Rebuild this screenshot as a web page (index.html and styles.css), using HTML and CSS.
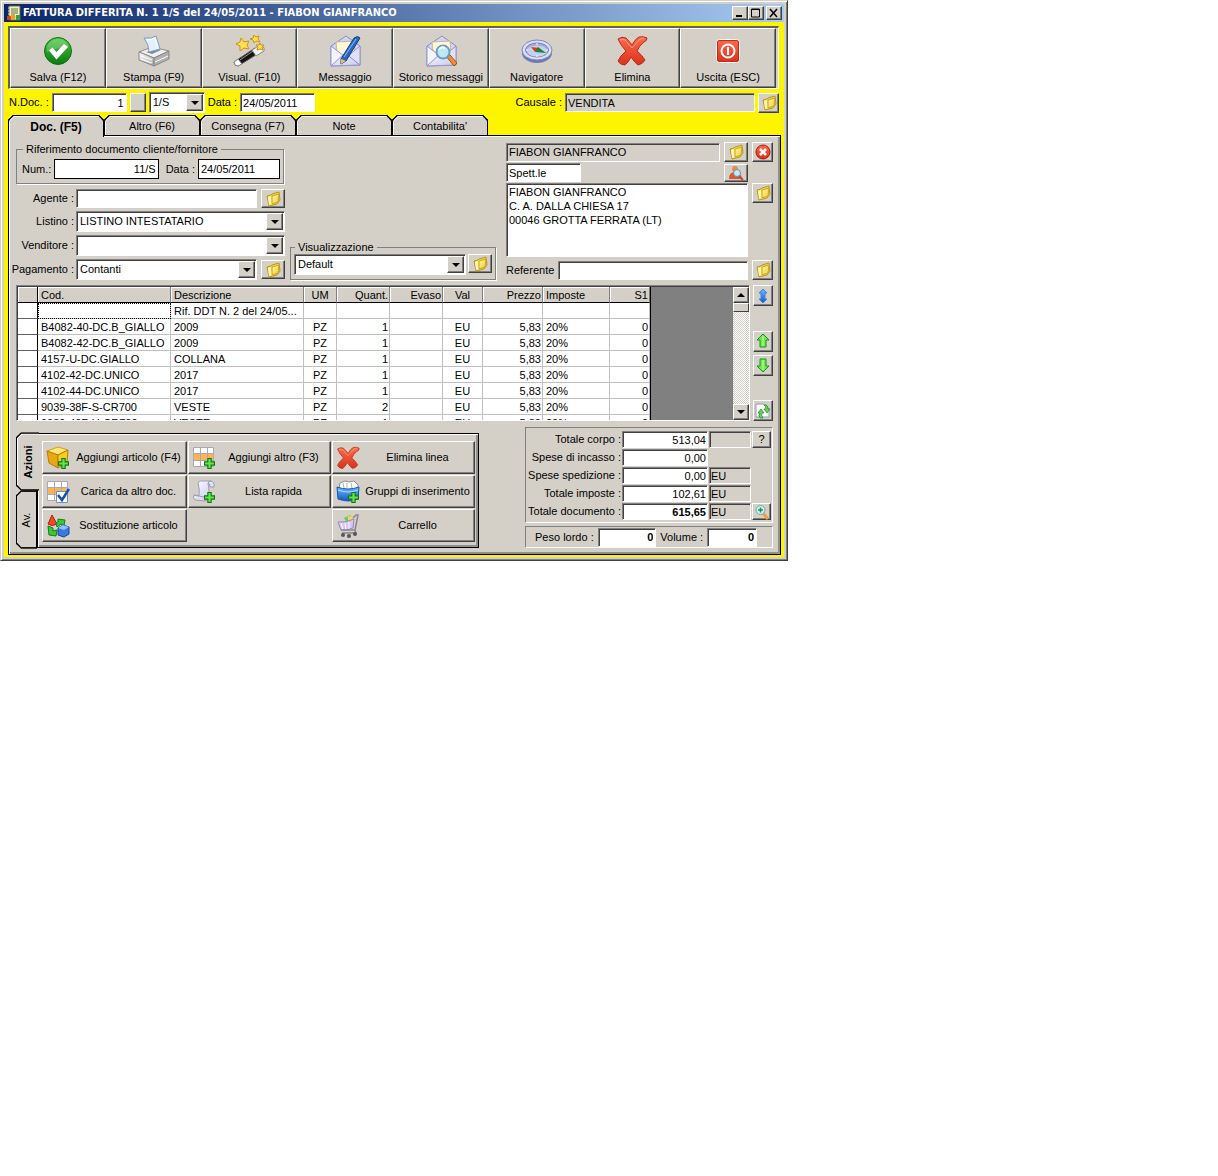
FILE: index.html
```html
<!doctype html>
<html lang="it">
<head>
    <meta charset="UTF-8">
    <meta name="viewport" content="width=device-width, initial-scale=1.0">
    <title>FATTURA DIFFERITA</title>
    <link rel="stylesheet" href="styles.css">
</head>
<body>
    <!-- icone -->
    <svg class="defs" aria-hidden="true">
        <defs>
            <linearGradient id="gGreen" x1="0" y1="0" x2="0" y2="1"><stop offset="0" stop-color="#4cc840"/><stop offset="1" stop-color="#0a7a12"/></linearGradient>
            <linearGradient id="gRed" x1="0" y1="0" x2="0" y2="1"><stop offset="0" stop-color="#ff6a4a"/><stop offset="1" stop-color="#d8321c"/></linearGradient>
            <linearGradient id="gGold" x1="0" y1="0" x2="1" y2="1"><stop offset="0" stop-color="#fff8a0"/><stop offset="1" stop-color="#f0cc30"/></linearGradient>
            <linearGradient id="gLilac" x1="0" y1="0" x2="1" y2="1"><stop offset="0" stop-color="#ffffff"/><stop offset="1" stop-color="#c4c4ee"/></linearGradient>
            <linearGradient id="gBlue" x1="0" y1="0" x2="0" y2="1"><stop offset="0" stop-color="#6cb8ff"/><stop offset="1" stop-color="#1458c0"/></linearGradient>
            <linearGradient id="gSteel" x1="0" y1="0" x2="1" y2="1"><stop offset="0" stop-color="#ffffff"/><stop offset="1" stop-color="#a8a8ac"/></linearGradient>
        </defs>
        <symbol id="i-plus" viewBox="0 0 10 10">
            <path d="M3.5.5h3v3h3v3h-3v3h-3v-3h-3v-3h3z" fill="#6be04a" stroke="#0c7a14"/>
        </symbol>
        <symbol id="i-app" viewBox="0 0 16 16">
            <path d="M3 1h11v14H3z" fill="#f2f0c8" stroke="#6a6a30"/>
            <path d="M5 4h7M5 6h7M5 8h7M5 10h4" stroke="#58783c"/>
            <path d="M2 3h2M2 6h2M2 9h2" stroke="#ddd"/>
            <path d="M1 11h4v4H1z" fill="#d04020"/><circle cx="7" cy="12" r="2.5" fill="#f0a020"/><path d="M10 10h4v5h-4z" fill="#38a040"/>
        </symbol>
        <symbol id="i-check" viewBox="0 0 32 32">
            <circle cx="16" cy="16" r="13.5" fill="url(#gGreen)" stroke="#0c7416"/>
            <path d="M5 12a11.500 11.500 0 0 1 22 0q-10 0-22 5z" fill="#fff" opacity=".22"/>
            <path d="M7 15.500l3.500-3 4 4.500 7.500-8 4 3-11.500 12.500z" fill="#fff"/>
        </symbol>
        <symbol id="i-printer" viewBox="0 0 32 32">
            <path d="M1 17l13-5 17 4-15 7z" fill="#f0f0f0" stroke="#8c8c8c"/>
            <path d="M1 17l15 6v8L1 25z" fill="url(#gSteel)" stroke="#888"/>
            <path d="M16 23l15-7v8l-15 7z" fill="#b0b0b0" stroke="#888"/>
            <path d="M3 21l11 4M3 24l11 4M17 27l13-6" stroke="#fff"/>
            <path d="M8 17l12-3 3 1-9 4z" fill="#888"/>
            <path d="M6 3q8 1 12-2l4 13-11 3q0-8-5-14z" fill="#e4f0ff" stroke="#7c9cc8"/>
            <path d="M9 5q5 0 8-2l3 10" fill="none" stroke="#fff"/>
        </symbol>
        <symbol id="i-wand" viewBox="0 0 32 32">
            <path d="M1 27l21-14 4 5L5 31q-4 0-4-4z" fill="#141414" stroke="#555"/>
            <path d="M19 15l8-5q5 1 4 6l-8 5z" fill="#f2f2f2" stroke="#888"/>
            <path d="M1 27l4-3 4 5-4 2q-4 0-4-4z" fill="#fff" stroke="#888"/>
            <path d="M7 25l13-9" stroke="#999"/>
            <g fill="#ffe050" stroke="#d09010">
                <path d="M8 3l3 4 5-1-2 4 2 4-5-1-4 3v-5l-4-2 4-2z"/>
                <path d="M21 0l2 2 3-1-1 3 2 3-4-1-2 2-1-3-3-1 3-1z"/>
                <path d="M27 8l1 2 3 0-2 2 1 3-3-1-3 1 1-3-2-2 3 0z"/>
            </g>
        </symbol>
        <symbol id="i-envelope" viewBox="0 0 32 32">
            <path d="M2 11L17 1l14 10v19L2 31z" fill="#d4d4f6" stroke="#8c8cc4"/>
            <path d="M7 7l18-1 1 12-9 6-9-6z" fill="#fff6d8" stroke="#c8b890"/>
            <path d="M2 11l13 10L2 31z" fill="#f4f4ff" stroke="#9494c8"/>
            <path d="M31 11L19 21l12 9z" fill="#e0e0fa" stroke="#9494c8"/>
            <path d="M2 31l14-13 15 12z" fill="url(#gLilac)" stroke="#9494c8"/>
        </symbol>
        <symbol id="i-mail" viewBox="0 0 32 32">
            <use href="#i-envelope"/>
            <path d="M12 24L25 3q4-3 6 0L17 26l-5 3z" fill="#2868c4" stroke="#123c84"/>
            <path d="M15 22L27 4" stroke="#8cc0ff"/>
            <path d="M12 24l5 2-5 3z" fill="#f0c060"/>
        </symbol>
        <symbol id="i-mailsearch" viewBox="0 0 32 32">
            <use href="#i-envelope"/>
            <path d="M22 22l3-2 7 8-3 3z" fill="#f09030" stroke="#a85010"/>
            <circle cx="18" cy="17" r="6.500" fill="#bce8fa" stroke="#6c9cc0" stroke-width="2"/>
            <path d="M14 15q2-4 6-2" stroke="#fff" stroke-width="2" fill="none"/>
        </symbol>
        <symbol id="i-compass" viewBox="0 0 32 32">
            <ellipse cx="16" cy="18" rx="15" ry="10" fill="#7078b0"/>
            <ellipse cx="16" cy="15" rx="15" ry="10" fill="#dcdff8" stroke="#8088b8"/>
            <ellipse cx="16" cy="15" rx="11.500" ry="7" fill="#a4acd8" stroke="#7880b4"/>
            <ellipse cx="16" cy="16" rx="10" ry="5.500" fill="#c8d0f0"/>
            <path d="M10 12l9 1-5 4z" fill="#e03820"/><path d="M17 12l8 6-11-1z" fill="#188830"/>
            <path d="M16 8v2M16 20v2M5 15h2M25 15h2" stroke="#fff"/>
        </symbol>
        <symbol id="i-cross" viewBox="0 0 32 32">
            <path d="M2 4q4-3 8-1 3 3 6 7 4-7 7-8 5-1 8 1 0 3-3 4-5 4-7 9 5 4 8 9-2 4-7 5-3-2-7-8-3 6-6 8-5 0-7-4 2-5 8-10-5-5-8-12z" fill="url(#gRed)" stroke="#b82c14"/>
            <path d="M4 5q3-1 5 0l7 8 8-9 4-1" stroke="#ff9c80" fill="none"/>
        </symbol>
        <symbol id="i-power" viewBox="0 0 32 32">
            <rect x="4.500" y="4.500" width="23" height="23" rx="3" fill="url(#gRed)" stroke="#fff"/>
            <rect x="5.500" y="5.500" width="21" height="21" rx="2" fill="none" stroke="#c02c10"/>
            <circle cx="16" cy="16" r="6.500" fill="none" stroke="#fff" stroke-width="2"/>
            <path d="M16 12v8" stroke="#fff" stroke-width="2"/>
        </symbol>
        <symbol id="i-folder" viewBox="0 0 16 16">
            <path d="M2 5l4-1 1-1 7-2 1 8-3 4-8 2z" fill="#f8d848" stroke="#b89420"/>
            <path d="M3 6l3-1 1 8-3 1z" fill="#fff8b0"/>
            <path d="M7 5l7-2-1 8-6 2z" fill="url(#gGold)" stroke="#c8a428"/>
        </symbol>
        <symbol id="i-usersearch" viewBox="0 0 16 16">
            <circle cx="7" cy="4" r="3" fill="#e88850"/>
            <path d="M1 14q0-7 6-7t7 7z" fill="#d85830"/>
            <path d="M11 11l4 4" stroke="#c84820" stroke-width="2"/>
            <circle cx="9" cy="8" r="3.500" fill="#c4e8f8" stroke="#6890a8"/>
        </symbol>
        <symbol id="i-clear" viewBox="0 0 16 16">
            <circle cx="8" cy="8" r="7" fill="url(#gRed)" stroke="#b81408"/>
            <path d="M5 5l6 6M11 5l-6 6" stroke="#fff" stroke-width="2.500"/>
        </symbol>
        <symbol id="i-updown" viewBox="0 0 16 16">
            <path d="M8 1l4 4h-2v6h2l-4 4-4-4h2V5H4z" fill="url(#gBlue)" stroke="#3c84e0"/>
        </symbol>
        <symbol id="i-up" viewBox="0 0 16 16">
            <path d="M8 1l6 6h-3v7H5V7H2z" fill="#70e850" stroke="#18941c"/><path d="M8 3v10" stroke="#c0ffa8"/>
        </symbol>
        <symbol id="i-down" viewBox="0 0 16 16">
            <path d="M8 15l6-6h-3V2H5v7H2z" fill="#70e850" stroke="#18941c"/><path d="M8 3v10" stroke="#c0ffa8"/>
        </symbol>
        <symbol id="i-refresh" viewBox="0 0 16 16">
            <path d="M1 1h7l6 5v8H1z" fill="#fff" stroke="#889cc0"/>
            <path d="M5 15q-2-3 0-5H3l3-4 3 4H7q-1 2 1 5zM9 2q4-1 4 4h2l-3 4-3-4h2q0-3-2-4z" fill="#68d850" stroke="#208828" stroke-width=".7"/>
        </symbol>
        <symbol id="i-cube" viewBox="0 0 24 24">
            <path d="M1 5l11-4 10 3-10 5z" fill="#ffe878" stroke="#d8a010"/>
            <path d="M1 5l11 4v13L3 17z" fill="#e8a810" stroke="#b87c08"/>
            <path d="M12 9l10-5-1 13-9 5z" fill="#f8cc20" stroke="#b87c08"/>
            <use href="#i-plus" x="12" y="12" width="11" height="11"/>
        </symbol>
        <symbol id="i-grid" viewBox="0 0 24 24">
            <path d="M1.500 1.500h20v19h-20z" fill="#fff" stroke="#a8a8b8"/>
            <path d="M2 8h19v6H2z" fill="#ffb450"/>
            <path d="M8.500 2v18M15.500 2v18M2 7.500h19M2 14.500h19" stroke="#a8a8b8"/>
        </symbol>
        <symbol id="i-gridplus" viewBox="0 0 24 24">
            <use href="#i-grid"/><use href="#i-plus" x="12" y="12" width="11" height="11"/>
        </symbol>
        <symbol id="i-gridcheck" viewBox="0 0 24 24">
            <use href="#i-grid"/>
            <path d="M10.500 11.500h11v11h-11z" fill="#fff" stroke="#7090c0"/>
            <path d="M12 15l4 5 7-11" stroke="#1450b0" stroke-width="2.500" fill="none"/>
        </symbol>
        <symbol id="i-scroll" viewBox="0 0 24 24">
            <path d="M6 3q1-3 5-2h8q4 1 3 6h-4q0-4-2-4 2 11 0 14 0 4-3 4L3 20q-3-2-1-5l5 1q1-7-1-13z" fill="url(#gLilac)" stroke="#9c9cb4"/>
            <path d="M2 15l10 2q2 2 1 4M19 1q-3 0-3 3" stroke="#9c9cb4" fill="none"/>
            <use href="#i-plus" x="12" y="12" width="11" height="11"/>
        </symbol>
        <symbol id="i-shapes" viewBox="0 0 24 24">
            <path d="M6 1l5 9q-5 3-9 0z" fill="#f04828" stroke="#b02010"/>
            <path d="M12 5l7 1-1 6-3-2-4 3-1-4 2-1z" fill="#38c838" stroke="#108018"/>
            <path d="M2 12l5 2 0 3 4-1-1 6-7-1z" fill="#38c838" stroke="#108018"/>
            <path d="M12 14l5-3 6 2v7l-5 3-6-2z" fill="#3878e0" stroke="#1444a0"/><path d="M12 14l6 2 5-3-6-2z" fill="#90c0ff"/>
        </symbol>
        <symbol id="i-box" viewBox="0 0 24 24">
            <path d="M4 3l5-2 4 1 5-1 4 4v5H3z" fill="#fff" stroke="#909090"/>
            <path d="M7 3l1 5M11 3v5M15 3l1 5" stroke="#b0b0b0"/>
            <path d="M1 7q11 4 22 0l-1 12q-9 4-20 0z" fill="url(#gBlue)" stroke="#1458b0"/>
            <path d="M2 10q10 4 20 0" stroke="#a8e0ff" fill="none"/>
            <use href="#i-plus" x="12" y="12" width="11" height="11"/>
        </symbol>
        <symbol id="i-cart" viewBox="0 0 24 24">
            <path d="M8 4l6-3 3 5-6 3z" fill="#60d060"/><path d="M12 2l6 1-1 4h-5z" fill="#f4d850"/>
            <path d="M2 8q8 1 16-3l-1 9q-6 2-12 2z" fill="#d8c4f8" stroke="#9888c0"/>
            <path d="M5 9l2 7M9 9l1 7M13 8v7" stroke="#fff"/>
            <path d="M17 4l3-3h2l-3 15 1 4M5 16l14 0M6 19l13 0" stroke="#888" fill="none" stroke-width="1.500"/>
            <circle cx="7" cy="21" r="2" fill="#555"/><circle cx="13" cy="22" r="2" fill="#555"/><circle cx="19" cy="20" r="2" fill="#555"/>
        </symbol>
        <symbol id="i-zoom" viewBox="0 0 16 16">
            <path d="M9 9l5 6" stroke="#f0a040" stroke-width="3"/>
            <circle cx="6.500" cy="6" r="4.500" fill="#d0f4e8" stroke="#70a8a8"/>
            <path d="M4 6h5M6.500 3.500v5" stroke="#189060" stroke-width="1.500"/>
        </symbol>
    </svg>

    <main class="window">
        <header class="titlebar">
            <svg class="icon16"><use href="#i-app"/></svg>
            <h1>FATTURA DIFFERITA N. 1 1/S del 24/05/2011 - FIABON GIANFRANCO</h1>
            <div class="win-buttons">
                <button class="btn win-btn" aria-label="Riduci"><svg viewBox="0 0 12 10"><path d="M2 8h6" stroke="#000" stroke-width="2"/></svg></button>
                <button class="btn win-btn" aria-label="Ingrandisci"><svg viewBox="0 0 12 10"><path d="M1.500 1v8h8V1zM1 1.500h9" fill="none" stroke="#000"/></svg></button>
                <button class="btn win-btn win-close" aria-label="Chiudi"><svg viewBox="0 0 12 10"><path d="M2 1l7 8M9 1L2 9" stroke="#000" stroke-width="1.500"/></svg></button>
            </div>
        </header>

        <div class="body">
            <nav class="toolbar">
                <button class="btn"><svg class="icon32"><use href="#i-check"/></svg>Salva (F12)</button>
                <button class="btn"><svg class="icon32"><use href="#i-printer"/></svg>Stampa (F9)</button>
                <button class="btn"><svg class="icon32"><use href="#i-wand"/></svg>Visual. (F10)</button>
                <button class="btn"><svg class="icon32"><use href="#i-mail"/></svg>Messaggio</button>
                <button class="btn"><svg class="icon32"><use href="#i-mailsearch"/></svg>Storico messaggi</button>
                <button class="btn"><svg class="icon32"><use href="#i-compass"/></svg>Navigatore</button>
                <button class="btn"><svg class="icon32"><use href="#i-cross"/></svg>Elimina</button>
                <button class="btn"><svg class="icon32"><use href="#i-power"/></svg>Uscita (ESC)</button>
            </nav>

            <div class="docbar">
                <label for="nDoc">N.Doc. :</label>
                <input class="field w-doc num" type="text" id="nDoc" value="1">
                <button class="btn btn-blank" aria-label="Numero"></button>
                <span class="select w-serie"><select class="field" id="serie" aria-label="Serie"><option>1/S</option></select></span>
                <label for="dataDoc">Data :</label>
                <input class="field w-doc" type="text" id="dataDoc" value="24/05/2011">
                <label class="push" for="causale">Causale :</label>
                <input class="field readonly w-causale" type="text" id="causale" value="VENDITA" readonly>
                <button class="btn btn-icon" aria-label="Cerca causale"><svg class="icon16"><use href="#i-folder"/></svg></button>
            </div>

            <div class="tabs" role="tablist">
                <button class="tab active" role="tab">Doc. (F5)</button>
                <button class="tab" role="tab">Altro (F6)</button>
                <button class="tab" role="tab">Consegna (F7)</button>
                <button class="tab" role="tab">Note</button>
                <button class="tab" role="tab">Contabilita'</button>
            </div>

            <section class="panel">
                <div class="head">
                    <div class="head-left">
                        <fieldset class="group riferimento">
                            <legend>Riferimento documento cliente/fornitore</legend>
                            <label for="rifNum">Num.:</label>
                            <input class="field flat num" type="text" id="rifNum" value="11/S">
                            <label for="rifData">Data :</label>
                            <input class="field flat w-data" type="text" id="rifData" value="24/05/2011">
                        </fieldset>
                        <div class="row">
                            <label for="agente">Agente :</label>
                            <input class="field" type="text" id="agente">
                            <button class="btn btn-icon wide" aria-label="Cerca agente"><svg class="icon16"><use href="#i-folder"/></svg></button>
                        </div>
                        <div class="row">
                            <label for="listino">Listino :</label>
                            <span class="select"><select class="field" id="listino"><option>LISTINO INTESTATARIO</option></select></span>
                        </div>
                        <div class="row">
                            <label for="venditore">Venditore :</label>
                            <span class="select"><select class="field" id="venditore"><option></option></select></span>
                        </div>
                        <div class="row">
                            <label for="pagamento">Pagamento :</label>
                            <span class="select"><select class="field" id="pagamento"><option>Contanti</option></select></span>
                            <button class="btn btn-icon wide" aria-label="Cerca pagamento"><svg class="icon16"><use href="#i-folder"/></svg></button>
                        </div>
                    </div>

                    <fieldset class="group visual">
                        <legend>Visualizzazione</legend>
                        <span class="select"><select class="field" aria-label="Visualizzazione"><option>Default</option></select></span>
                        <button class="btn btn-icon wide" aria-label="Cerca visualizzazione"><svg class="icon16"><use href="#i-folder"/></svg></button>
                    </fieldset>

                    <div class="head-right">
                        <div class="line">
                            <input class="field readonly grow" type="text" aria-label="Intestatario" value="FIABON GIANFRANCO" readonly>
                            <button class="btn btn-icon wide" aria-label="Cerca intestatario"><svg class="icon16"><use href="#i-folder"/></svg></button>
                            <button class="btn btn-icon" aria-label="Annulla"><svg class="icon16"><use href="#i-clear"/></svg></button>
                        </div>
                        <div class="line">
                            <input class="field w-doc" type="text" aria-label="Titolo" value="Spett.le">
                            <button class="btn btn-icon wide push indent" aria-label="Scheda cliente"><svg class="icon16"><use href="#i-usersearch"/></svg></button>
                        </div>
                        <div class="line top">
                            <textarea class="field grow" rows="5" aria-label="Indirizzo">FIABON GIANFRANCO
C. A. DALLA CHIESA 17
00046 GROTTA FERRATA (LT)</textarea>
                            <button class="btn btn-icon" aria-label="Cerca indirizzo"><svg class="icon16"><use href="#i-folder"/></svg></button>
                        </div>
                        <div class="line">
                            <label for="referente">Referente</label>
                            <input class="field grow" type="text" id="referente">
                            <button class="btn btn-icon" aria-label="Cerca referente"><svg class="icon16"><use href="#i-folder"/></svg></button>
                        </div>
                    </div>
                </div>

                <div class="lines">
                    <div class="grid">
                        <div class="grid-view">
                            <table>
                                <colgroup>
                                    <col class="c-mark"><col class="c-cod"><col class="c-cod"><col class="c-um"><col class="c-qta"><col class="c-qta"><col class="c-val"><col class="c-prezzo"><col class="c-imp"><col class="c-val">
                                </colgroup>
                                <thead>
                                    <tr><th></th><th>Cod.</th><th>Descrizione</th><th class="c">UM</th><th class="r">Quant.</th><th class="r">Evaso</th><th class="c">Val</th><th class="r">Prezzo</th><th>Imposte</th><th class="r">S1</th></tr>
                                </thead>
                                <tbody>
                                    <tr><th></th><td class="focus"></td><td>Rif. DDT N. 2 del 24/05...</td><td></td><td></td><td></td><td></td><td></td><td></td><td></td></tr>
                                    <tr><th></th><td>B4082-40-DC.B_GIALLO</td><td>2009</td><td class="c">PZ</td><td class="r">1</td><td></td><td class="c">EU</td><td class="r">5,83</td><td>20%</td><td class="r">0</td></tr>
                                    <tr><th></th><td>B4082-42-DC.B_GIALLO</td><td>2009</td><td class="c">PZ</td><td class="r">1</td><td></td><td class="c">EU</td><td class="r">5,83</td><td>20%</td><td class="r">0</td></tr>
                                    <tr><th></th><td>4157-U-DC.GIALLO</td><td>COLLANA</td><td class="c">PZ</td><td class="r">1</td><td></td><td class="c">EU</td><td class="r">5,83</td><td>20%</td><td class="r">0</td></tr>
                                    <tr><th></th><td>4102-42-DC.UNICO</td><td>2017</td><td class="c">PZ</td><td class="r">1</td><td></td><td class="c">EU</td><td class="r">5,83</td><td>20%</td><td class="r">0</td></tr>
                                    <tr><th></th><td>4102-44-DC.UNICO</td><td>2017</td><td class="c">PZ</td><td class="r">1</td><td></td><td class="c">EU</td><td class="r">5,83</td><td>20%</td><td class="r">0</td></tr>
                                    <tr><th></th><td>9039-38F-S-CR700</td><td>VESTE</td><td class="c">PZ</td><td class="r">2</td><td></td><td class="c">EU</td><td class="r">5,83</td><td>20%</td><td class="r">0</td></tr>
                                    <tr><th></th><td>9039-40F-U-CR700</td><td>VESTE</td><td class="c">PZ</td><td class="r">1</td><td></td><td class="c">EU</td><td class="r">5,83</td><td>20%</td><td class="r">0</td></tr>
                                </tbody>
                            </table>
                        </div>
                        <div class="scrollbar">
                            <button class="btn" aria-label="Su"><i class="arrow up"></i></button>
                            <div class="thumb"></div>
                            <button class="btn last" aria-label="Giu"><i class="arrow"></i></button>
                        </div>
                    </div>
                    <div class="side">
                        <button class="btn btn-icon" aria-label="Espandi"><svg class="icon16"><use href="#i-updown"/></svg></button>
                        <div class="side-move">
                            <button class="btn btn-icon" aria-label="Sposta su"><svg class="icon16"><use href="#i-up"/></svg></button>
                            <button class="btn btn-icon" aria-label="Sposta giu"><svg class="icon16"><use href="#i-down"/></svg></button>
                        </div>
                        <button class="btn btn-icon" aria-label="Aggiorna"><svg class="icon16"><use href="#i-refresh"/></svg></button>
                    </div>
                </div>

                <div class="foot">
                    <div class="actions">
                        <div class="vtabs" role="tablist">
                            <button class="vtab active" role="tab">Azioni</button>
                            <button class="vtab" role="tab">Av.</button>
                        </div>
                        <div class="action-grid">
                            <button class="btn action"><svg class="icon24"><use href="#i-cube"/></svg><span>Aggiungi articolo (F4)</span></button>
                            <button class="btn action"><svg class="icon24"><use href="#i-gridplus"/></svg><span>Aggiungi altro (F3)</span></button>
                            <button class="btn action"><svg class="icon24"><use href="#i-cross"/></svg><span>Elimina linea</span></button>
                            <button class="btn action"><svg class="icon24"><use href="#i-gridcheck"/></svg><span>Carica da altro doc.</span></button>
                            <button class="btn action"><svg class="icon24"><use href="#i-scroll"/></svg><span>Lista rapida</span></button>
                            <button class="btn action"><svg class="icon24"><use href="#i-box"/></svg><span>Gruppi di inserimento</span></button>
                            <button class="btn action"><svg class="icon24"><use href="#i-shapes"/></svg><span>Sostituzione articolo</span></button>
                            <button class="btn action third"><svg class="icon24"><use href="#i-cart"/></svg><span>Carrello</span></button>
                        </div>
                    </div>

                    <div class="summary">
                        <div class="totals">
                            <label for="totCorpo">Totale corpo :</label>
                            <input class="field num" type="text" id="totCorpo" value="513,04">
                            <input class="field readonly" type="text" aria-label="Valuta corpo" readonly>
                            <button class="btn">?</button>
                            <label for="incasso">Spese di incasso :</label>
                            <input class="field num" type="text" id="incasso" value="0,00">
                            <label class="first" for="spedizione">Spese spedizione :</label>
                            <input class="field num" type="text" id="spedizione" value="0,00">
                            <input class="field readonly" type="text" aria-label="Valuta spedizione" value="EU" readonly>
                            <label class="first" for="imposte">Totale imposte :</label>
                            <input class="field num" type="text" id="imposte" value="102,61">
                            <input class="field readonly" type="text" aria-label="Valuta imposte" value="EU" readonly>
                            <label class="first" for="totDoc">Totale documento :</label>
                            <input class="field num strong" type="text" id="totDoc" value="615,65">
                            <input class="field readonly" type="text" aria-label="Valuta documento" value="EU" readonly>
                            <button class="btn" aria-label="Dettaglio"><svg class="icon16"><use href="#i-zoom"/></svg></button>
                        </div>
                        <div class="weights">
                            <label for="peso">Peso lordo :</label>
                            <input class="field num strong w-peso" type="text" id="peso" value="0">
                            <label for="volume">Volume :</label>
                            <input class="field num strong w-volume" type="text" id="volume" value="0">
                        </div>
                    </div>
                </div>
            </section>
        </div>
    </main>
</body>
</html>
```

FILE: styles.css
```css
* {margin: 0; padding: 0; box-sizing: border-box;}
body {
    background: #fff;
    font: 11px/13px "Liberation Sans", Arial, sans-serif;
    color: #000;
}
button, input, select, textarea {
    font: inherit; color: inherit;
    border-radius: 0; outline: none;
}
svg {display: block; flex: none;}
.defs {position: absolute; width: 0; height: 0;}
.icon16 {width: 16px; height: 16px;}
.icon24 {width: 24px; height: 24px;}
.icon32 {width: 32px; height: 32px;}

/* finestra */
.window {
    width: 100%; max-width: 788px;
    padding: 3px;
    background: #d4d0c8;
    border: 1px solid;
    border-color: #d4d0c8 #404040 #404040 #d4d0c8;
    box-shadow: inset 1px 1px #fff, inset -1px -1px #808080;
}
.titlebar {
    display: flex;
    align-items: center;
    height: 18px;
    padding: 0 2px;
    background: linear-gradient(to right, #0a246a, #a6caf0);
    color: #fff;
}
.titlebar h1 {
    flex: 1;
    margin-left: 1px;
    font: bold 11px/18px "DejaVu Sans Condensed", "DejaVu Sans", sans-serif;
    white-space: nowrap;
    overflow: hidden;
}
.win-buttons {display: flex;}
.win-btn {width: 16px; height: 14px;}
.win-btn svg {width: 12px; height: 10px;}
.win-close {margin-left: 2px;}
.body {padding: 4px 3px 2px 4px; background: #fdf500;}

/* controlli */
.btn {
    display: flex;
    justify-content: center;
    align-items: center;
    background: #d4d0c8;
    border: 1px solid;
    border-color: #fff #404040 #404040 #fff;
    box-shadow: inset -1px -1px #808080;
    white-space: nowrap;
}
.btn-icon {flex: none; width: 21px; height: 20px;}
.btn-icon.wide {width: 24px;}
.btn-blank {width: 16px; height: 19px;}
.field {
    min-width: 0;
    height: 19px;
    padding: 0 2px;
    background: #fff;
    border: 1px solid;
    border-color: #808080 #fff #fff #808080;
    box-shadow: inset 1px 1px #404040;
}
.readonly {background: #d4d0c8;}
.flat {height: 20px; border-color: #000; box-shadow: none;}
.num {text-align: right;}
.strong {font-weight: bold;}
.grow {flex: 1;}
.push {margin-left: auto;}
.select {position: relative; display: block;}
.select select {
    display: block;
    width: 100%; height: 21px;
    padding: 0 18px 0 3px;
    appearance: none;
}
.select::before {
    content: "";
    position: absolute; top: 2px; right: 2px; bottom: 2px;
    width: 15px;
    background: #d4d0c8;
    border: 1px solid;
    border-color: #fff #404040 #404040 #fff;
    box-shadow: inset -1px -1px #808080;
    pointer-events: none;
}
.select::after {
    content: "";
    position: absolute; top: 9px; right: 6px;
    border: 4px solid transparent;
    border-top-color: #000;
    border-bottom: 0;
    pointer-events: none;
}
.group {
    display: flex;
    min-width: 0;
    border: 1px solid #808080;
    box-shadow: 1px 1px #fff;
}
.group legend {margin-left: 1px; padding: 0 3px; background: #d4d0c8;}

/* barra principale */
.toolbar {
    display: flex;
    margin-right: 2px;
    padding-right: 2px;
    background: #d4d0c8;
    border: solid;
    border-width: 2px 1px 1px 2px;
    border-color: #606060 #fff #fff #606060;
}
.toolbar .btn {
    flex: 1;
    flex-direction: column;
    gap: 4px;
    min-width: 0; height: 60px;
    padding-top: 2px;
}

.docbar {
    display: flex;
    align-items: center;
    gap: 3px;
    margin: 3px 2px 2px 1px;
}
.docbar label {white-space: nowrap;}
.w-doc {width: 75px;}
.w-serie {width: 56px;}
.w-causale {width: 190px;}
.w-data {width: 82px;}

/* linguette */
.tabs {display: flex;}
.tab {
    width: 96px; height: 20px;
    padding-top: 1px;
    background: #d4d0c8;
    border: 1px solid #000;
    border-bottom: 0;
    border-radius: 5px 5px 0 0;
    corner-shape: bevel;
    box-shadow: inset 1px 1px #fff;
}
.tab.active {
    position: relative;
    height: 22px;
    margin-bottom: -2px;
    font-weight: bold;
    font-size: 12px;
}
.panel {
    padding: 6px 7px;
    background: #d4d0c8;
    border: 1px solid #000;
    box-shadow: inset 1px 1px #fff, inset -2px -2px #909090;
}

/* testata documento */
.head {display: flex; align-items: flex-end;}
.head-left {width: 269px;}
.riferimento {
    align-items: center;
    gap: 3px;
    padding: 3px 3px 4px 5px;
    margin: 0 1px 5px 0;
}
.riferimento label {white-space: nowrap;}
.riferimento .num {flex: 1;}
.riferimento .num + label {margin-left: 4px;}
.row {
    display: flex;
    align-items: center;
    margin-top: 3px;
}
.row label {
    display: flex;
    justify-content: flex-end;
    width: 60px;
    padding-right: 2px;
    white-space: nowrap;
}
.row .field, .row .select {flex: 1;}
.row .btn-icon {margin-left: 4px;}
.row .btn-icon, .visual .btn-icon {height: 19px;}
.visual {
    width: 206px;
    gap: 2px;
    margin: 0 10px 0 5px;
    padding: 0 3px 4px;
}
.visual .select {flex: 1;}
.head-right {flex: 1;}
.line {
    display: flex;
    align-items: center;
    gap: 4px;
    margin-bottom: 1px;
}
.line:last-child {margin: 3px 0 0;}
.line.top {align-items: flex-start;}
.indent {margin-right: 25px;}
.line .indent {height: 18px;}
textarea.field {height: auto; padding: 1px 2px; line-height: 14px; resize: none; overflow: hidden;}

/* righe documento */
.lines {display: flex; gap: 3px; margin-top: 5px;}
.grid {
    flex: 1;
    display: flex;
    min-width: 0; height: 136px;
    background: #808080;
    border: 1px solid;
    border-color: #808080 #fff #fff #808080;
    box-shadow: inset 1px 1px #404040;
    padding: 1px 0 0 1px;
}
.grid-view {flex: 1; overflow: hidden;}
table {
    width: 633px;
    table-layout: fixed;
    border-collapse: separate; border-spacing: 0;
    border-right: 1px solid #000;
}
th, td {
    height: 16px;
    padding: 0 1px 0 3px;
    line-height: 14px;
    font-weight: normal;
    text-align: left;
    white-space: nowrap;
    overflow: hidden;
    background: #fff;
    border: solid #c0c0c0;
    border-width: 0 1px 1px 0;
}
thead th {background: #d4d0c8; border-color: #808080; border-bottom-color: #000; box-shadow: inset 1px 1px #fff;}
th:first-child {border-right-color: #000;}
tbody th {border-bottom-color: #606060;}
.c {text-align: center; padding: 0;}
.r {text-align: right;}
.focus {outline: 1px dotted #000; outline-offset: -1px;}
.c-mark {width: 20px;}
.c-cod {width: 133px;}
.c-um {width: 33px;}
.c-qta {width: 53px;}
.c-val {width: 40px;}
.c-prezzo {width: 60px;}
.c-imp {width: 67px;}
.scrollbar {
    display: flex;
    flex-direction: column;
    width: 16px;
    background: repeating-conic-gradient(#fff 0 25%, #d4d0c8 0 50%) 0 0 / 2px 2px;
}
.scrollbar .btn {height: 16px;}
.scrollbar .last {margin-top: auto;}
.thumb {
    height: 9px;
    background: #d4d0c8;
    border: 1px solid;
    border-color: #fff #404040 #404040 #fff;
}
.arrow {
    border: 4px solid transparent;
    border-top-color: #000;
    border-bottom: 0;
}
.arrow.up {border-bottom: 4px solid #000; border-top: 0;}
.side {
    display: flex;
    flex-direction: column;
    justify-content: space-between;
}
.side .btn-icon {width: 20px; height: 21px;}
.side-move {display: flex; flex-direction: column; gap: 3px;}

/* azioni */
.foot {
    display: flex;
    justify-content: space-between;
    align-items: flex-end;
    margin-top: 6px;
}
.actions {display: flex; margin-top: 6px;}
.vtabs {display: flex; flex-direction: column; width: 21px;}
.vtab {
    flex: 1;
    writing-mode: vertical-rl;
    transform: rotate(180deg);
    background: #d4d0c8;
    border: 1px solid #000;
    border-radius: 0 5px 5px 0;
    corner-shape: bevel;
}
.vtab.active {
    width: 23px;
    position: relative;
    border-left: 0;
    font-weight: bold;
    box-shadow: inset -1px -1px #fff;
}
.action-grid {
    display: grid;
    grid-template-columns: 145px 143px 143px;
    gap: 1px;
    padding: 7px 3px 5px 4px;
    border: 1px solid #000;
    box-shadow: inset 1px 1px #fff, inset -2px -2px #909090;
}
.action {height: 33px; padding: 0 3px; justify-content: flex-start;}
.action span {flex: 1; text-align: center; padding-left: 4px;}
.third {grid-column: 3;}

/* totali */
.summary {width: 248px;}
.totals {
    display: grid;
    grid-template-columns: 1fr 86px 42px 19px;
    grid-auto-rows: 17px;
    gap: 1px;
    padding: 3px 1px 2px;
    border: 1px solid;
    border-color: #808080 #fff #fff #808080;
}
.totals .field {width: 100%; height: 17px; padding: 0 1px;}
.totals label {text-align: right; line-height: 17px; white-space: nowrap;}
.totals .first {grid-column: 1;}
.weights {
    display: flex;
    align-items: center;
    gap: 4px;
    height: 22px;
    margin-top: 3px;
    padding: 0 15px 0 9px;
    border: 1px solid;
    border-color: #808080 #fff #fff #808080;
}
.weights label {white-space: nowrap;}
.w-peso {flex: 6;}
.w-volume {flex: 5;}
```
